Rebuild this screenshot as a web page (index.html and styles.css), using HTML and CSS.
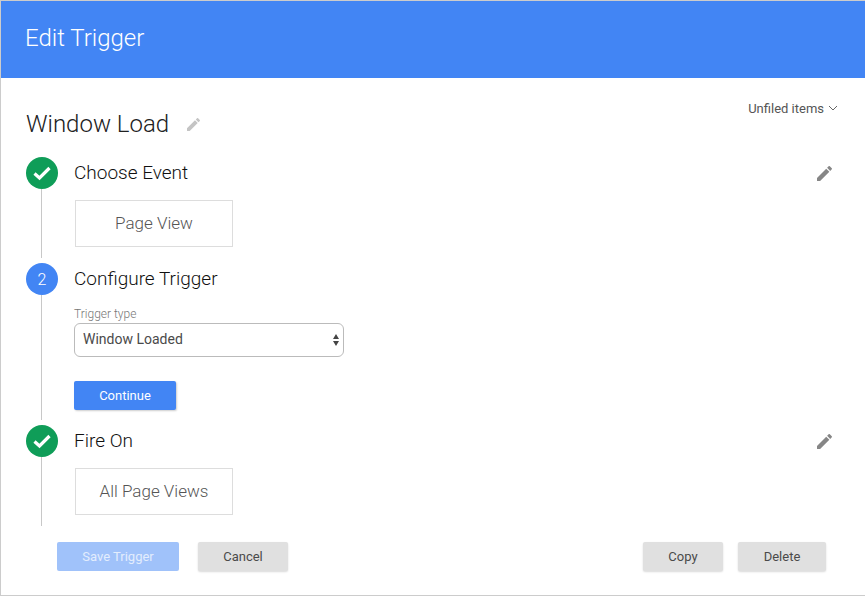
FILE: index.html
```html
<!DOCTYPE html>
<html lang="en">
<head>
  <meta charset="UTF-8">
  <meta name="viewport" content="width=device-width, initial-scale=1.0">
  <title>Edit Trigger</title>
  <link rel="stylesheet" href="styles.css">
</head>

<body>
  <div class="painel">
    <header class="topo">Edit Trigger</header>

    <div class="conteudo">
      <div class="linha-titulo">
        <div class="titulo">
          <h1>Window Load</h1>
          <svg class="lapis-nome" width="13" height="13" viewBox="3 3 18 18"><path d="M3 17.25V21h3.75L17.81 9.94l-3.75-3.75L3 17.25zM20.71 7.04a1 1 0 0 0 0-1.41l-2.34-2.34a1 1 0 0 0-1.41 0l-1.83 1.83 3.75 3.75 1.83-1.83z" fill="#c4c4c4"/></svg>
        </div>
        <div class="pasta">
          Unfiled items
          <svg width="10" height="6" viewBox="0 0 10 6"><path d="M1 1l4 4 4-4" fill="none" stroke="#666" stroke-width="1"/></svg>
        </div>
      </div>

      <section class="passo passo-um">
        <div class="trilho">
          <div class="bola verde">
            <svg width="20" height="16" viewBox="0 0 20 16"><path d="M2.5 8.5l5 4.5 10-10" fill="none" stroke="#fff" stroke-width="3.2"/></svg>
          </div>
          <div class="linha"></div>
        </div>
        <div class="corpo">
          <div class="cabeca">
            <h2>Choose Event</h2>
            <svg class="lapis" width="15" height="15" viewBox="3 3 18 18"><path d="M3 17.25V21h3.75L17.81 9.94l-3.75-3.75L3 17.25zM20.71 7.04a1 1 0 0 0 0-1.41l-2.34-2.34a1 1 0 0 0-1.41 0l-1.83 1.83 3.75 3.75 1.83-1.83z" fill="#868686"/></svg>
          </div>
          <div class="cartao">Page View</div>
        </div>
      </section>

      <section class="passo passo-dois">
        <div class="trilho">
          <div class="bola azul">2</div>
          <div class="linha"></div>
        </div>
        <div class="corpo">
          <div class="cabeca">
            <h2>Configure Trigger</h2>
          </div>
          <label class="rotulo" for="tipo">Trigger type</label>
          <div class="caixa-select">
            <select id="tipo">
              <option>Window Loaded</option>
            </select>
            <svg class="setas" width="6" height="12" viewBox="0 0 6 12"><path d="M3 0l3 5H0zM3 12L0 7h6z" fill="#444"/></svg>
          </div>
          <button class="botao primario continuar">Continue</button>
        </div>
      </section>

      <section class="passo passo-tres">
        <div class="trilho">
          <div class="bola verde">
            <svg width="20" height="16" viewBox="0 0 20 16"><path d="M2.5 8.5l5 4.5 10-10" fill="none" stroke="#fff" stroke-width="3.2"/></svg>
          </div>
          <div class="linha"></div>
        </div>
        <div class="corpo">
          <div class="cabeca">
            <h2>Fire On</h2>
            <svg class="lapis" width="15" height="15" viewBox="3 3 18 18"><path d="M3 17.25V21h3.75L17.81 9.94l-3.75-3.75L3 17.25zM20.71 7.04a1 1 0 0 0 0-1.41l-2.34-2.34a1 1 0 0 0-1.41 0l-1.83 1.83 3.75 3.75 1.83-1.83z" fill="#868686"/></svg>
          </div>
          <div class="cartao">All Page Views</div>
        </div>
      </section>

      <footer class="rodape">
        <button class="botao desativado salvar">Save Trigger</button>
        <button class="botao cinza cancelar">Cancel</button>
        <button class="botao cinza copiar">Copy</button>
        <button class="botao cinza apagar">Delete</button>
      </footer>
    </div>
  </div>
</body>
</html>
```

FILE: styles.css
```css
html, body {
  height: 100%;
}

body {
  margin: 0;
  font-family: Roboto, Arial, sans-serif;
  background-color: #fff;
  color: #212121;
  overflow: hidden;
}

.painel {
  height: 596px;
  box-sizing: border-box;
  border-left: 1px solid #ccc;
  border-top: 1px solid #ccc;
  border-bottom: 1px solid #ccc;
  display: flex;
  flex-direction: column;
}

.topo {
  height: 77px;
  flex: none;
  background-color: #4285f4;
  color: #fff;
  font-size: 24px;
  font-weight: 300;
  line-height: 75px;
  padding-left: 24px;
}

.conteudo {
  flex: 1;
  display: flex;
  flex-direction: column;
  padding: 0 32px 0 25px;
}

.linha-titulo {
  display: flex;
  justify-content: space-between;
  align-items: flex-start;
  height: 38px;
  margin-top: 22px;
}

.pasta {
  display: flex;
  align-items: center;
  gap: 4px;
  height: 16px;
  margin-right: -5px;
  font-size: 13px;
  color: #555;
}

.titulo {
  display: flex;
  align-items: center;
  gap: 18px;
  height: 28px;
  margin-top: 10px;
}

.titulo h1 {
  margin: 0;
  font-size: 24px;
  font-weight: 300;
  color: #212121;
}

.passo {
  display: flex;
  gap: 16px;
}

.passo-um {
  height: 106px;
  margin-top: 19px;
}

.passo-dois {
  height: 162px;
}

.passo-tres {
  height: 101px;
}

.trilho {
  width: 32px;
  flex: none;
  display: flex;
  flex-direction: column;
  align-items: center;
}

.bola {
  width: 32px;
  height: 32px;
  flex: none;
  border-radius: 50%;
  display: flex;
  align-items: center;
  justify-content: center;
  color: #fff;
  font-size: 16px;
  font-weight: 300;
}

.verde {
  background-color: #0f9d58;
}

.azul {
  background-color: #4285f4;
}

.linha {
  width: 1px;
  flex: 1;
  background-color: #c8c8c8;
  margin: 0 0 5px -1px;
}

.passo-tres .linha {
  margin-bottom: 0;
}

.corpo {
  flex: 1;
}

.cabeca {
  display: flex;
  align-items: center;
  justify-content: space-between;
  height: 32px;
}

.cabeca h2 {
  margin: 0 0 2px;
  font-size: 19px;
  font-weight: 300;
  color: #111;
}

.lapis {
  margin-right: 1px;
}

.cartao {
  width: 158px;
  height: 47px;
  box-sizing: border-box;
  margin: 11px 0 0 1px;
  padding-bottom: 2px;
  border: 1px solid #ddd;
  display: flex;
  align-items: center;
  justify-content: center;
  font-size: 17px;
  font-weight: 300;
  color: #555;
}

.rotulo {
  display: block;
  margin-top: 12px;
  height: 14px;
  line-height: 14px;
  font-size: 12px;
  font-weight: 300;
  color: #777;
}

.caixa-select {
  position: relative;
  width: 270px;
  margin-top: 2px;
}

.caixa-select select {
  display: block;
  width: 270px;
  height: 34px;
  box-sizing: border-box;
  padding: 0 8px 2px;
  appearance: none;
  background: #fff;
  border: 1px solid #bbb;
  border-radius: 6px;
  font-family: Roboto, Arial, sans-serif;
  font-size: 14px;
  color: #4a4a4a;
}

.setas {
  position: absolute;
  top: 11px;
  right: 5px;
}

.botao {
  height: 29px;
  box-sizing: border-box;
  padding: 0;
  border: none;
  border-radius: 2px;
  font-family: Roboto, Arial, sans-serif;
  font-size: 13px;
}

.primario {
  background-color: #4285f4;
  color: #fff;
  box-shadow: 1px 1px 2px rgba(0,0,0,0.2);
}

.continuar {
  display: block;
  width: 102px;
  margin-top: 24px;
}

.cinza {
  background-color: #e0e0e0;
  color: #4a4a4a;
  box-shadow: 0 1px 2px rgba(0,0,0,0.15);
}

.desativado {
  background-color: #a0c2fa;
  color: #e3edfd;
}

.rodape {
  display: flex;
  margin-top: 16px;
  padding: 0 7px 0 31px;
}

.salvar {
  width: 122px;
}

.cancelar {
  width: 90px;
  margin-left: 19px;
}

.copiar {
  width: 80px;
  margin-left: auto;
}

.apagar {
  width: 88px;
  margin-left: 15px;
}
```
